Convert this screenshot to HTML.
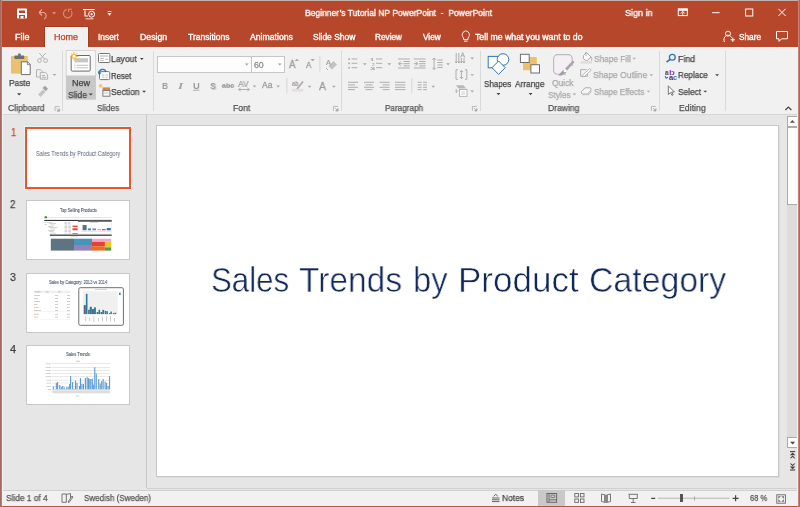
<!DOCTYPE html>
<html><head><meta charset="utf-8"><style>
*{margin:0;padding:0;box-sizing:border-box}
html,body{width:800px;height:507px;overflow:hidden;background:#E6E6E6;font-family:"Liberation Sans", sans-serif}
.a{position:absolute}
.t{position:absolute;white-space:pre;transform-origin:0 0;font-family:"Liberation Sans", sans-serif;will-change:transform}
svg{position:absolute;overflow:visible}
</style></head><body>
<!-- window chrome -->
<div class="a" style="left:0;top:0;width:800px;height:47px;background:#B7472A"></div>
<div class="a" style="left:0;top:0;width:800px;height:1px;background:#C6B2AA"></div>
<!-- home tab -->
<div class="a" style="left:44px;top:26px;width:45px;height:21px;background:#A63A1E"></div>
<div class="a" style="left:45px;top:27px;width:43px;height:21px;background:#FAFAFA"></div>
<div class="a" style="left:46px;top:28px;width:41px;height:20px;background:#F1F1F1"></div>
<!-- ribbon -->
<div class="a" style="left:0;top:47px;width:800px;height:68px;background:#F1F1F1"></div>
<div class="a" style="left:0;top:114px;width:800px;height:1px;background:#D6D6D6"></div>
<!-- group separators -->
<div class="a" style="left:62px;top:51px;width:1px;height:60px;background:#DADADA"></div>
<div class="a" style="left:153px;top:51px;width:1px;height:60px;background:#DADADA"></div>
<div class="a" style="left:341px;top:51px;width:1px;height:60px;background:#DADADA"></div>
<div class="a" style="left:480px;top:51px;width:1px;height:60px;background:#DADADA"></div>
<div class="a" style="left:659px;top:51px;width:1px;height:60px;background:#DADADA"></div>
<div class="a" style="left:725px;top:51px;width:1px;height:60px;background:#DADADA"></div>
<!-- workspace -->
<div class="a" style="left:0;top:115px;width:800px;height:375px;background:#E6E6E6"></div>
<div class="a" style="left:146px;top:115px;width:1px;height:373px;background:#C6C6C6"></div>
<div class="a" style="left:147px;top:488px;width:651px;height:1px;background:#D0D0D0"></div>
<!-- slide -->
<div class="a" style="left:157px;top:126px;width:623px;height:352px;background:#DCDCDC"></div>
<div class="a" style="left:156px;top:125px;width:623px;height:352px;background:#C8C8C8"></div>
<div class="a" style="left:157px;top:126px;width:621px;height:350px;background:#FFFFFF"></div>
<!-- scrollbar -->
<div class="a" style="left:787px;top:116px;width:10px;height:331px;background:#DCDCDC"></div>
<div class="a" style="left:787px;top:116px;width:10px;height:11px;background:#fff;border:1px solid #ABABAB;border-right:none"></div>
<div class="a" style="left:787px;top:127px;width:10px;height:78px;background:#fff;border:1px solid #ABABAB;border-right:none"></div>
<div class="a" style="left:787px;top:437px;width:10px;height:11px;background:#fff;border:1px solid #ABABAB;border-right:none"></div>
<!-- status bar -->
<div class="a" style="left:0;top:490px;width:800px;height:1px;background:#D0D0D0"></div>
<div class="a" style="left:0;top:491px;width:800px;height:15px;background:#F1F1F1"></div>
<div class="a" style="left:538px;top:490px;width:27px;height:16px;background:#C9C9C9"></div>
<div class="a" style="left:0;top:506px;width:800px;height:1px;background:#C0533A"></div>
<!-- window borders -->
<div class="a" style="left:0;top:0;width:1px;height:507px;background:#A56A60"></div>
<div class="a" style="left:1px;top:0;width:1px;height:507px;background:#C07868"></div>
<div class="a" style="left:2px;top:47px;width:1px;height:459px;background:#EAF6F6"></div>
<div class="a" style="left:797px;top:47px;width:1px;height:459px;background:#EAF6F6"></div>
<div class="a" style="left:798px;top:0;width:1px;height:507px;background:#D08070"></div>
<div class="a" style="left:799px;top:0;width:1px;height:507px;background:#A86A60"></div>
<!-- thumbnails -->
<div class="a" style="left:24px;top:126px;width:108px;height:64px;background:#E4F4F6"></div>
<div class="a" style="left:25px;top:127px;width:106px;height:62px;border:2px solid #E9552C;background:#fff"></div>
<div class="a" style="left:26px;top:200px;width:104px;height:60px;border:1px solid #C8C8C8;background:#fff"></div>
<div class="a" style="left:26px;top:273px;width:104px;height:60px;border:1px solid #C8C8C8;background:#fff"></div>
<div class="a" style="left:26px;top:345px;width:104px;height:60px;border:1px solid #C8C8C8;background:#fff"></div>
<svg style="left:0;top:0" width="800" height="507" viewBox="0 0 800 507">
<!-- ===== Title bar QAT ===== -->
<!-- save -->
<rect x="17" y="8.5" width="10" height="10" rx="1" fill="#fff"/>
<rect x="19" y="10.5" width="6" height="2.5" fill="#B7472A"/>
<rect x="19" y="15" width="6" height="3.5" fill="#B7472A"/>
<rect x="20.5" y="16" width="3" height="2.5" fill="#fff"/>
<!-- undo -->
<path d="M39 12.5 L42 9.5 M39 12.5 L42 15.5 M39 12.5 H44 A3.5 3.5 0 0 1 44 19" fill="none" stroke="#E7A593" stroke-width="1.1"/>
<path d="M52.2 12.3 L56 12.3 L54.1 14.2 Z" fill="#E7A593"/>
<!-- redo -->
<path d="M66.6 9.4 A4.3 4.3 0 1 0 71.2 11" fill="none" stroke="#D98A74" stroke-width="1.1"/>
<path d="M72 9.2 H68.5 V12" fill="none" stroke="#D98A74" stroke-width="1.1"/>
<!-- from beginning -->
<rect x="83" y="9" width="11.6" height="1.1" fill="#fff"/>
<path d="M85 10.5 V16 H88" fill="none" stroke="#fff" stroke-width="1.1"/>
<circle cx="91.6" cy="14.2" r="3" fill="none" stroke="#fff" stroke-width="1"/>
<circle cx="91.6" cy="14.2" r="1.1" fill="#fff"/>
<rect x="85.5" y="18" width="8" height="1.5" fill="#E9A898"/>
<!-- customize -->
<rect x="107.6" y="11" width="3.8" height="0.8" fill="#fff"/>
<path d="M107.4 13 L111.6 13 L109.5 15.8 Z" fill="#fff"/>
<!-- ribbon display options -->
<rect x="678.3" y="8.8" width="9" height="6.8" fill="none" stroke="#fff" stroke-width="1"/>
<rect x="678.3" y="9" width="9" height="1.8" fill="#fff"/>
<path d="M682.8 11.5 L680.8 13.5 M682.8 11.5 L684.8 13.5 M682.8 11.5 V15.5" fill="none" stroke="#fff" stroke-width="0.9"/>
<!-- min max close -->
<rect x="712" y="12.2" width="7.6" height="1" fill="#fff"/>
<rect x="745.6" y="9" width="7.2" height="7" fill="none" stroke="#fff" stroke-width="1"/>
<path d="M778.4 8.8 L785.6 16 M785.6 8.8 L778.4 16" stroke="#fff" stroke-width="1"/>
<!-- share person -->
<circle cx="728" cy="33.6" r="2.5" fill="none" stroke="#fff" stroke-width="1"/>
<path d="M724.4 42 A4 4.5 0 0 1 731.6 37.6" fill="none" stroke="#fff" stroke-width="1"/>
<path d="M732.8 37.6 V42 M730.6 39.8 H735" stroke="#fff" stroke-width="1"/>
<!-- comment -->
<path d="M776.5 31.5 H787.5 V38.8 H781.6 L779 41.4 V38.8 H776.5 Z" fill="none" stroke="#fff" stroke-width="1"/>
<!-- tell me lightbulb -->
<path d="M463.6 38 C462 36.5 462 34 462.6 33.2 A3.4 3.4 0 0 1 469 33.2 C469.6 34 469.6 36.5 468 38 V39.6 H463.6 Z" fill="none" stroke="#fff" stroke-width="0.9"/>
<rect x="464" y="40.7" width="3.6" height="0.9" fill="#fff"/>
</svg>
<svg style="left:0;top:0" width="800" height="507" viewBox="0 0 800 507">
<!-- ===== Clipboard ===== -->
<rect x="11" y="56" width="16.7" height="17.6" fill="#EBC16F"/>
<rect x="14.4" y="55.5" width="9.8" height="3.4" rx="0.6" fill="#6E6E6E"/>
<rect x="18" y="53.6" width="2.8" height="2.4" rx="0.8" fill="#6E6E6E"/>
<path d="M21.3 61.8 H27.6 L30.2 64.4 V74.6 H21.3 Z" fill="#fff" stroke="#707070" stroke-width="1"/>
<path d="M27.4 61.8 V64.6 H30.2" fill="none" stroke="#707070" stroke-width="0.8"/>
<path d="M17.00 93.30 H21.30 L19.15 95.50 Z" fill="#444"/>
<!-- cut -->
<g fill="none" stroke="#B2B2B2" stroke-width="1">
<circle cx="39.4" cy="60.6" r="1.9"/>
<circle cx="45.6" cy="60.6" r="1.9"/>
<path d="M40.4 59 L45.8 53 M44.6 59 L39.2 53"/>
<!-- copy -->
<path d="M36.5 69.7 H40.6 L42.3 71.4 V77 H36.5 Z"/>
<path d="M40.3 72.4 H45.3 L47.6 74.7 V79.2 H40.3 Z" fill="#F1F1F1"/>
<path d="M41.8 75.5 H45 M41.8 77.3 H46"/>
</g>
<path d="M52.55 74.10 H56.35 L54.45 76.00 Z" fill="#A8A8A8"/>
<!-- format painter -->
<path d="M38 94.5 L43 89.5 L45.5 92 L40.5 97 Z" fill="#C4C4C4"/>
<path d="M42.5 88 L45 85.8 L48 88.8 L45.8 91.2 Z" fill="#A2A2A2"/>
<!-- launcher clipboard -->
<g fill="none" stroke="#ABABAB" stroke-width="0.8">
<path d="M55.0 111.0 V106.6 H59.5"/><path d="M56.6 108.2 L59.3 110.9"/><path d="M59.6 108.8 V111.2 H57.2 Z" fill="#A0A0A0"/>
<path d="M333.5 110.8 V106.4 H338.0"/><path d="M335.1 108.0 L337.8 110.7"/><path d="M338.1 108.6 V111.0 H335.7 Z" fill="#A0A0A0"/>
<path d="M472.4 110.8 V106.4 H476.9"/><path d="M474.0 108.0 L476.7 110.7"/><path d="M477.0 108.6 V111.0 H474.6 Z" fill="#A0A0A0"/>
<path d="M651.4 110.8 V106.4 H655.9"/><path d="M653.0 108.0 L655.7 110.7"/><path d="M656.0 108.6 V111.0 H653.6 Z" fill="#A0A0A0"/>
</g>
<!-- ===== Slides ===== -->
<rect x="66.2" y="50.5" width="29.4" height="25.4" fill="#F6F6F6" stroke="#D4D4D4" stroke-width="1"/>
<rect x="65.9" y="75.9" width="30" height="23.8" fill="#C8C8C8"/>
<rect x="71.2" y="55.5" width="19" height="15.6" rx="1.2" fill="#fff" stroke="#6A6A6A" stroke-width="1"/>
<rect x="74.5" y="58.2" width="13.5" height="4.2" fill="#C6C6C6"/>
<path d="M76.5 65.3 H88 M76.5 67.8 H88" stroke="#B0B0B0" stroke-width="0.8"/>
<path d="M74.3 65.3 H75.3 M74.3 67.8 H75.3" stroke="#888" stroke-width="0.8"/>
<g stroke="#F0B038" stroke-width="0.9">
<path d="M74.1 52 V60.6 M69.8 56.3 H78.4 M71 53.2 L77.2 59.4 M77.2 53.2 L71 59.4"/>
</g>
<circle cx="74.1" cy="56.3" r="2" fill="#fff" stroke="#F0B038" stroke-width="0.9"/>
<path d="M88.70 93.60 H92.80 L90.75 95.50 Z" fill="#444"/>
<!-- layout -->
<rect x="98.5" y="53.5" width="11.4" height="9" rx="1" fill="#fff" stroke="#777" stroke-width="1"/>
<path d="M100 56 H108.5" stroke="#C0C0C0" stroke-width="1.2"/>
<path d="M100.2 58.3 H103.8 M100.2 60.3 H103.8 M105.2 59.3 H108.2" stroke="#B0B0B0" stroke-width="0.9"/>
<path d="M139.90 58.10 H143.70 L141.80 60.00 Z" fill="#444"/>
<!-- reset -->
<rect x="99.5" y="71.6" width="10.2" height="8" rx="1" fill="#fff" stroke="#777" stroke-width="1"/>
<path d="M102 75 H104.5 M102 77.2 H104.5 M105.5 75 H108 M105.5 77.2 H108" stroke="#B8B8B8" stroke-width="0.9"/>
<path d="M99 73.6 A3.6 3.4 0 0 1 106 72" fill="none" stroke="#2E75B6" stroke-width="1.3"/>
<path d="M97.8 71.3 L99 75 L101.6 72.8 Z" fill="#2E75B6"/>
<!-- section -->
<rect x="102.6" y="87.4" width="7.4" height="3" fill="#ED7D31"/>
<rect x="102.9" y="90.6" width="7" height="5.6" fill="#fff" stroke="#777" stroke-width="1"/>
<path d="M104 93 H108.5" stroke="#B8B8B8" stroke-width="0.8"/>
<circle cx="100.6" cy="85.8" r="1.9" fill="#F5C97B"/>
<path d="M142.20 90.80 H146.00 L144.10 92.70 Z" fill="#444"/>
<!-- ===== Font ===== -->
<rect x="157.5" y="56.5" width="94" height="16" fill="#FDFDFD" stroke="#C6C6C6" stroke-width="1"/>
<rect x="251.5" y="56.5" width="33" height="16" fill="#FDFDFD" stroke="#C6C6C6" stroke-width="1"/>
<path d="M244.90 63.60 H248.70 L246.80 65.50 Z" fill="#A0A0A0"/>
<path d="M277.90 63.60 H281.70 L279.80 65.50 Z" fill="#A0A0A0"/>
<path d="M294.6 61 H299 L296.8 58.7 Z" fill="#A6A6A6"/>
<path d="M310.40 59.00 H314.80 L312.60 61.30 Z" fill="#A6A6A6"/>
<rect x="319.4" y="56" width="1" height="15.5" fill="#D6D6D6"/>
<rect x="286.4" y="78" width="1" height="15.7" fill="#D6D6D6"/>
<!-- clear formatting eraser -->
<path d="M328.5 66 L333.5 61 L337 64.5 L332 69.5 Z" fill="#C2C2C2"/>
<path d="M326 68 L328 70" stroke="#B0B0B0" stroke-width="1"/>
<!-- strikethrough abc line -->
<path d="M221.5 86 H234.5" stroke="#A0A0A0" stroke-width="0.9"/>
<!-- AV arrows -->
<path d="M238.6 89.5 H249.4 M238.6 89.5 L240.6 88 M238.6 89.5 L240.6 91 M249.4 89.5 L247.4 88 M249.4 89.5 L247.4 91" stroke="#A8A8A8" stroke-width="0.9" fill="none"/>
<path d="M252.60 85.60 H256.40 L254.50 87.50 Z" fill="#A8A8A8"/>
<path d="M276.20 85.60 H280.00 L278.10 87.50 Z" fill="#A8A8A8"/>
<path d="M307.70 85.80 H311.50 L309.60 87.70 Z" fill="#A8A8A8"/>
<path d="M332.00 85.80 H335.80 L333.90 87.70 Z" fill="#A8A8A8"/>
<!-- highlighter -->
<path d="M297 89 L303 81.5" stroke="#A8A8A8" stroke-width="1.6"/>
<rect x="292" y="88.9" width="11.2" height="2.6" fill="#E6DCE5"/>
<!-- ===== Paragraph ===== -->
<g fill="#A6A6A6">
<rect x="348.3" y="58.3" width="1.6" height="1.6"/><rect x="348.3" y="62.6" width="1.6" height="1.6"/><rect x="348.3" y="67" width="1.6" height="1.6"/>
</g>
<g stroke="#A6A6A6" stroke-width="0.9" fill="none">
<path d="M351.6 59 H357.3 M351.6 63.3 H357.3 M351.6 67.7 H357.3"/>
<path d="M376 59 H382.2 M376 63.3 H382.2 M376 67.7 H382.2"/>
<!-- indents -->
<path d="M398 59 H409.8 M403.5 61.5 H409.8 M403.5 63.7 H409.8 M403.5 65.9 H409.8 M398 68 H409.8"/>
<path d="M398.5 63.7 L400.8 61.6 M398.5 63.7 L400.8 65.8 M398.5 63.7 H402.5"/>
<path d="M413.7 59 H425.6 M419.2 61.5 H425.6 M419.2 63.7 H425.6 M419.2 65.9 H425.6 M413.7 68 H425.6"/>
<path d="M417.8 63.7 L415.5 61.6 M417.8 63.7 L415.5 65.8 M417.8 63.7 H413.8"/>
<!-- align -->
<path d="M348 82.3 H358 M348 84.9 H355 M348 87.3 H358 M348 89.6 H355"/>
<path d="M364 82.3 H374 M365.5 84.9 H372.5 M364 87.3 H374 M365.5 89.6 H372.5"/>
<path d="M379.6 82.3 H389.6 M382.6 84.9 H389.6 M379.6 87.3 H389.6 M382.6 89.6 H389.6"/>
<path d="M395 82.3 H405.4 M395 84.9 H405.4 M395 87.3 H405.4 M395 89.6 H405.4"/>
<!-- columns -->
<path d="M417.7 82.3 H421.6 M417.7 84.9 H421.6 M417.7 87.3 H421.6 M417.7 89.6 H421.6 M423.1 82.3 H427 M423.1 84.9 H427 M423.1 87.3 H427 M423.1 89.6 H427"/>
<!-- line spacing -->
<path d="M434.1 58 V69.5 M432.3 59.8 L434.1 58 L435.9 59.8 M432.3 67.7 L434.1 69.5 L435.9 67.7"/>
<path d="M437.4 60 H442.8 M437.4 62.5 H442.8 M437.4 65 H442.8 M437.4 67.5 H442.8"/>
<!-- text direction -->
<path d="M456.2 53 V63 M458.8 53 V63 M461.4 58 V63 M464 58 V63 M455.2 61.5 L456.2 63 L457.2 61.5 M457.8 61.5 L458.8 63 L459.8 61.5 M460.4 61.5 L461.4 63 L462.4 61.5 M463 61.5 L464 63 L465 61.5"/>
<path d="M460.6 57.5 L462.7 52.5 L464.8 57.5 M461.4 55.8 H464"/>
<!-- align text -->
<path d="M457.8 69.7 H456 V79.3 H457.8 M465 69.7 H466.8 V79.3 H465"/>
<path d="M461.4 70.5 V78.6 M459.8 72 L461.4 70.5 L463 72 M459.8 77 L461.4 78.6 L463 77"/>
<!-- smartart -->
<rect x="459.5" y="89.5" width="7.5" height="6.8" fill="#fff" stroke="#A6A6A6" stroke-width="0.8"/>
<path d="M461.3 92 H465.2 M461.3 94 H465.2" stroke="#C8B8C8" stroke-width="0.8"/>
<!-- paragraph sep -->
</g>
<path d="M456 85.2 H463.5 L466 88.6 H458.5 Z" fill="#B8B8B8"/>
<path d="M456.2 89 V92.5 L458 90.5" stroke="#A6A6A6" stroke-width="0.9" fill="none"/>
<rect x="411.3" y="78.4" width="1" height="15.2" fill="#D6D6D6"/>
<g fill="#A8A8A8">
<path d="M362.90 63.30 H366.70 L364.80 65.20 Z"/>
<path d="M387.40 63.30 H391.20 L389.30 65.20 Z"/>
<path d="M446.15 63.30 H449.95 L448.05 65.20 Z"/>
<path d="M470.25 57.50 H474.05 L472.15 59.40 Z"/>
<path d="M470.25 74.20 H474.05 L472.15 76.10 Z"/>
<path d="M470.25 90.60 H474.05 L472.15 92.50 Z"/>
<path d="M431.30 85.80 H435.10 L433.20 87.70 Z"/>
</g>
<!-- ===== Drawing ===== -->
<g fill="#fff" stroke="#2E75B6" stroke-width="1">
<rect x="488.2" y="56.4" width="11.4" height="11.4"/>
<circle cx="503" cy="59.5" r="5.8"/>
<path d="M498.6 61 L505.2 67.7 L498.6 74.4 L492 67.7 Z"/>
</g>
<path d="M496.55 92.90 H500.35 L498.45 95.20 Z" fill="#444"/>
<rect x="523" y="57" width="13.8" height="13.2" fill="#EEC069"/>
<rect x="520.4" y="54.3" width="8.8" height="8.2" fill="#fff" stroke="#6E6E6E" stroke-width="1"/>
<rect x="530.9" y="64.7" width="8.6" height="8.3" fill="#fff" stroke="#6E6E6E" stroke-width="1"/>
<path d="M528.70 92.90 H532.50 L530.60 95.20 Z" fill="#444"/>
<!-- quick styles -->
<path d="M566 74.2 H557.6 A4 4 0 0 1 553.6 70.2 V58.6 A4 4 0 0 1 557.6 54.6 H568.2 A4 4 0 0 1 572.2 58.6 V66" fill="#F4EFF4" stroke="#B9B9B9" stroke-width="1.1"/>
<path d="M558.2 75.2 L563.5 69.8 L566.4 72.6 L561 75.8 Z" fill="#A0A0A0"/>
<path d="M565 68.6 L572.8 60.4 L574.6 62 L567.2 70.6 Z" fill="#A8A8A8"/>
<circle cx="564.8" cy="71" r="1.2" fill="#fff"/>
<path d="M572.5 93.6 H576.3 L574.4 95.5 Z" fill="#ABABAB"/>
<!-- shape fill -->
<path d="M583.5 55.5 L586.5 52.5 L591 57 L587.5 60.3 Q585 60.8 583.3 58.6 Z" fill="#fff" stroke="#A0A0A0" stroke-width="0.9"/>
<path d="M586 52 V56" stroke="#A0A0A0" stroke-width="0.9"/>
<path d="M591 57 Q592.5 58.5 591.6 60.6" fill="none" stroke="#A0A0A0" stroke-width="0.9"/>
<rect x="580.5" y="61.2" width="11.5" height="2.4" fill="#E2DAE2"/>
<!-- shape outline -->
<path d="M586.5 69.6 H580.6 V76.3 H587.3 V73" fill="none" stroke="#A8A8A8" stroke-width="0.9"/>
<path d="M582.8 75 L589.6 68.6 L591.2 70.2 L584.4 76.4 L582.4 76.8 Z" fill="#fff" stroke="#A8A8A8" stroke-width="0.8"/>
<!-- shape effects -->
<path d="M581.5 91.6 L585 87.8 H590.2 Q591.5 88.5 590.8 90.2 L587.8 94 H582.2 Q580.8 93.2 581.5 91.6 Z" fill="#F6F6F6" stroke="#A4A4A4" stroke-width="0.9"/>
<path d="M582.4 94.8 H588.4 L591.6 91" fill="none" stroke="#C8C8C8" stroke-width="1.1"/>
<g fill="#B0B0B0">
<path d="M632.35 57.70 H636.15 L634.25 59.60 Z"/>
<path d="M649.40 74.30 H653.20 L651.30 76.20 Z"/>
<path d="M646.55 90.70 H650.35 L648.45 92.60 Z"/>
</g>
<!-- ===== Editing ===== -->
<circle cx="672.3" cy="57.2" r="2.9" fill="none" stroke="#2E75B6" stroke-width="1.3"/>
<path d="M670.2 59.4 L666.6 62" stroke="#2E75B6" stroke-width="1.6"/>
<path d="M715.20 74.30 H719.00 L717.10 76.20 Z" fill="#444"/>
<path d="M703.35 90.70 H707.15 L705.25 92.60 Z" fill="#444"/>
<path d="M668.3 85.8 V94.5 L670.3 92.5 L672 95.4 L673.2 94.8 L671.6 92 H674.4 Z" fill="#fff" stroke="#6A6A6A" stroke-width="0.9"/>
<path d="M665 76 L666.2 78.3 L668 77.2" stroke="#2E75B6" stroke-width="1.1" fill="none"/>
<!-- collapse ribbon -->
<path d="M785.4 110 L788.4 107 L791.4 110" fill="none" stroke="#444" stroke-width="1.2"/>
</svg>
<svg style="left:0;top:0" width="800" height="507"><rect x="193" y="89.8" width="6.4" height="0.9" fill="#A8A8A8"/></svg>
<svg style="left:0;top:0" width="800" height="507" viewBox="0 0 800 507">
<!-- ===== slide 2 thumbnail: dashboard ===== -->
<rect x="44.5" y="216.2" width="2.5" height="2" rx="0.5" fill="#3C8A3C"/>
<rect x="47" y="217" width="65" height="0.6" fill="#D8D8D8"/>
<rect x="44.2" y="219.9" width="67.5" height="1.1" fill="#333333"/>
<g fill="#B4B4B4">
<rect x="47.0" y="222.0" width="5.2" height="0.55"/>
<rect x="64.5" y="222.0" width="2.5" height="0.55"/>
<rect x="68.2" y="222.0" width="2.4" height="0.55"/>
<rect x="49.2" y="223.3" width="7.0" height="0.55"/>
<rect x="64.5" y="223.3" width="2.6" height="0.55"/>
<rect x="68.2" y="223.3" width="2.1" height="0.55"/>
<rect x="50.4" y="224.7" width="4.1" height="0.55"/>
<rect x="64.5" y="224.7" width="2.8" height="0.55"/>
<rect x="68.2" y="224.7" width="2.3" height="0.55"/>
<rect x="48.0" y="226.0" width="5.2" height="0.55"/>
<rect x="64.5" y="226.0" width="3.0" height="0.55"/>
<rect x="68.2" y="226.0" width="2.5" height="0.55"/>
<rect x="49.2" y="227.4" width="8.2" height="0.55"/>
<rect x="64.5" y="227.4" width="2.5" height="0.55"/>
<rect x="68.2" y="227.4" width="2.6" height="0.55"/>
<rect x="50.4" y="228.7" width="4.8" height="0.55"/>
<rect x="64.5" y="228.7" width="2.6" height="0.55"/>
<rect x="68.2" y="228.7" width="2.9" height="0.55"/>
<rect x="48.0" y="230.1" width="6.6" height="0.55"/>
<rect x="64.5" y="230.1" width="2.7" height="0.55"/>
<rect x="68.2" y="230.1" width="2.7" height="0.55"/>
<rect x="49.2" y="231.4" width="4.3" height="0.55"/>
<rect x="64.5" y="231.4" width="2.8" height="0.55"/>
<rect x="68.2" y="231.4" width="2.6" height="0.55"/>
<rect x="50.4" y="232.8" width="5.5" height="0.55"/>
<rect x="64.5" y="232.8" width="2.0" height="0.55"/>
<rect x="68.2" y="232.8" width="2.9" height="0.55"/>
<rect x="44.5" y="222" width="2" height="0.6"/><rect x="44.5" y="224" width="2" height="0.6"/>
</g>
<rect x="72.5" y="225.6" width="5.2" height="1.4" fill="#EE4A40"/>
<rect x="72.5" y="228.3" width="5.2" height="1.9" fill="#EE3A30"/>
<rect x="72.5" y="233" width="5.2" height="1" fill="#5CB85C"/>
<rect x="78" y="221" width="33.7" height="13" fill="#fff" stroke="#E0E0E0" stroke-width="0.4"/>
<rect x="78" y="221" width="33.7" height="0.8" fill="#5A5A5A"/>
<rect x="90" y="222.5" width="8" height="0.5" fill="#B0B0B0"/>
<rect x="82.6" y="225" width="4" height="5.3" fill="#5D7180"/>
<rect x="87.8" y="228.4" width="3.2" height="1.9" fill="#3D8DB0"/>
<rect x="92.5" y="228.4" width="3.5" height="1.9" fill="#8E7CB8"/>
<rect x="97.6" y="229" width="3.4" height="1.3" fill="#E89AC0"/>
<rect x="102" y="229" width="3.6" height="1.3" fill="#E04848"/>
<rect x="106.7" y="228.1" width="4.1" height="2.2" fill="#2E6E9E"/>
<rect x="81" y="231" width="30" height="0.4" fill="#C8C8C8"/>
<rect x="49.8" y="234.5" width="61.9" height="1.4" fill="#4A4A4A"/>
<rect x="70" y="236.6" width="8" height="0.5" fill="#C0C0C0"/>
<rect x="50.8" y="238.7" width="23.2" height="11.9" fill="#5F7482"/>
<rect x="74" y="238.7" width="18" height="6.3" fill="#4A93B8"/>
<rect x="74" y="245" width="18" height="5.6" fill="#9482B8"/>
<rect x="92" y="238.7" width="19.2" height="3.1" fill="#F2A6CB"/>
<rect x="92" y="241.8" width="12.9" height="4.4" fill="#E4432F"/>
<rect x="92" y="246.2" width="12.9" height="4.4" fill="#EE6A2A"/>
<rect x="104.9" y="241.8" width="6.3" height="5.6" fill="#E8C82A"/>
<rect x="104.9" y="247.4" width="6.3" height="3.2" fill="#4E9A4E"/>
<!-- ===== slide 3 ===== -->
<rect x="33.8" y="290.6" width="36.3" height="2.7" fill="#F0F0F0"/>
<g fill="#BFB2A8">
<rect x="34.5" y="291.5" width="6" height="0.8"/><rect x="46" y="291.5" width="2.5" height="0.8"/><rect x="58" y="291.5" width="2.5" height="0.8"/>
</g>
<g fill="#C4B8B0">
<rect x="34" y="295.2" width="6" height="0.7"/><rect x="55" y="295.2" width="3" height="0.7"/><rect x="67" y="295.2" width="3" height="0.7"/>
<rect x="34" y="298.1" width="4" height="0.7"/><rect x="55" y="298.1" width="3" height="0.7"/><rect x="67" y="298.1" width="3" height="0.7"/>
<rect x="34" y="301" width="6" height="0.7"/><rect x="55" y="301" width="3" height="0.7"/><rect x="67" y="301" width="3" height="0.7"/>
<rect x="34" y="304.2" width="3.5" height="0.7"/><rect x="55" y="304.2" width="3" height="0.7"/><rect x="67" y="304.2" width="3" height="0.7"/>
<rect x="34" y="307.1" width="5" height="0.7"/><rect x="55" y="307.1" width="3" height="0.7"/><rect x="67" y="307.1" width="3" height="0.7"/>
<rect x="34" y="310.1" width="7" height="0.7"/><rect x="55" y="310.1" width="3" height="0.7"/><rect x="67" y="310.1" width="3" height="0.7"/>
<rect x="34" y="313.9" width="5" height="0.7"/><rect x="55" y="313.9" width="3" height="0.7"/><rect x="67" y="313.9" width="3" height="0.7"/>
<rect x="34" y="316.7" width="4" height="0.7"/><rect x="55" y="316.7" width="3" height="0.7"/><rect x="67" y="316.7" width="3" height="0.7"/>
</g>
<rect x="34" y="311.6" width="36" height="0.3" fill="#DDD"/>
<rect x="34" y="319" width="36" height="0.3" fill="#E4E4E4"/>
<rect x="78.8" y="287.7" width="44.6" height="37.6" rx="1.5" fill="#fff" stroke="#6E6E6E" stroke-width="1"/>
<rect x="95" y="289" width="12" height="0.6" fill="#B8B8B8"/>
<rect x="82.8" y="291.3" width="34.9" height="23.1" fill="#F0F0F0"/>
<g fill="#56687A">
<rect x="83.75" y="305.1" width="2.10" height="9.00"/>
<rect x="88.1" y="309.75" width="1.65" height="4.35"/>
<rect x="92" y="309" width="1.90" height="5.10"/>
<rect x="96.65" y="312" width="1.85" height="2.10"/>
<rect x="100.6" y="312" width="1.70" height="2.10"/>
<rect x="104.75" y="310.9" width="1.75" height="3.20"/>
<rect x="108.9" y="313.1" width="1.50" height="1.00"/>
<rect x="112.85" y="313.1" width="1.65" height="1.00"/>
</g>
<g fill="#2C7AA2">
<rect x="85.85" y="293.85" width="1.65" height="20.25"/>
<rect x="89.75" y="306.75" width="2.10" height="7.35"/>
<rect x="93.9" y="307.35" width="2.00" height="6.75"/>
<rect x="98.5" y="309.75" width="1.60" height="4.35"/>
<rect x="102.3" y="309.9" width="1.85" height="4.20"/>
<rect x="106.5" y="311.25" width="1.40" height="2.85"/>
<rect x="110.4" y="311.6" width="1.50" height="2.50"/>
<rect x="114.5" y="312.75" width="1.70" height="1.35"/>
<rect x="119.1" y="292.6" width="1.5" height="2.4"/>
</g>
<g fill="#A8A8A8">
<rect x="85.5" y="316.5" width="0.6" height="5"/><rect x="89.5" y="317.5" width="0.6" height="3.5"/><rect x="93.6" y="316.2" width="0.6" height="6"/>
<rect x="98.3" y="318" width="0.6" height="3.5"/><rect x="102.2" y="317" width="0.6" height="4.5"/><rect x="106.4" y="316.2" width="0.6" height="5"/>
<rect x="110.4" y="316.2" width="0.6" height="5.5"/><rect x="114.4" y="318" width="0.6" height="3.5"/>
</g>
<!-- ===== slide 4 ===== -->
<g fill="#C8C8C8">
<rect x="51.8" y="363.6" width="58.4" height="0.4"/><rect x="51.8" y="367.1" width="58.4" height="0.4"/><rect x="51.8" y="370" width="58.4" height="0.4"/>
<rect x="51.8" y="373.3" width="58.4" height="0.4"/><rect x="51.8" y="376.2" width="58.4" height="0.4"/><rect x="51.8" y="379.9" width="58.4" height="0.4"/>
<rect x="51.8" y="382.8" width="58.4" height="0.4"/><rect x="51.8" y="386.1" width="58.4" height="0.4"/><rect x="51.8" y="389.1" width="58.4" height="0.5"/>
</g>
<g fill="#B8B8B8">
<rect x="45.6" y="363.6" width="5.4" height="0.6"/><rect x="45.6" y="367.1" width="5.4" height="0.6"/><rect x="45.6" y="370" width="5.4" height="0.6"/>
<rect x="45.6" y="373.3" width="5.4" height="0.6"/><rect x="45.6" y="376.2" width="5.4" height="0.6"/><rect x="46.5" y="379.9" width="4.5" height="0.6"/>
<rect x="46.5" y="382.8" width="4.5" height="0.6"/><rect x="46.5" y="386.1" width="4.5" height="0.6"/><rect x="48" y="389" width="3" height="0.6"/>
<rect x="76" y="360.8" width="4" height="0.8"/><rect x="76" y="395.6" width="3.4" height="0.7"/>
</g>
<g fill="#5B9BD5">
<rect x="52.81" y="386.49" width="1.1" height="2.81"/>
<rect x="55.77" y="383.04" width="1.1" height="6.26"/>
<rect x="57.05" y="382.05" width="1.1" height="7.25"/>
<rect x="59.22" y="385.01" width="1.1" height="4.29"/>
<rect x="60.70" y="386.98" width="1.1" height="2.32"/>
<rect x="62.18" y="386.00" width="1.1" height="3.30"/>
<rect x="63.66" y="387.28" width="1.1" height="2.02"/>
<rect x="66.13" y="387.28" width="1.1" height="2.02"/>
<rect x="67.61" y="386.98" width="1.1" height="2.32"/>
<rect x="69.09" y="384.02" width="1.1" height="5.28"/>
<rect x="70.07" y="376.13" width="1.1" height="13.17"/>
<rect x="72.04" y="382.05" width="1.1" height="7.25"/>
<rect x="73.52" y="388.95" width="1.1" height="0.35"/>
<rect x="75.00" y="380.57" width="1.1" height="8.73"/>
<rect x="76.48" y="383.04" width="1.1" height="6.26"/>
<rect x="78.95" y="386.00" width="1.1" height="3.30"/>
<rect x="79.93" y="378.11" width="1.1" height="11.19"/>
<rect x="81.41" y="384.02" width="1.1" height="5.28"/>
<rect x="82.89" y="384.02" width="1.1" height="5.28"/>
<rect x="84.86" y="378.11" width="1.1" height="11.19"/>
<rect x="86.64" y="377.12" width="1.1" height="12.18"/>
<rect x="88.02" y="378.11" width="1.1" height="11.19"/>
<rect x="89.30" y="379.09" width="1.1" height="10.21"/>
<rect x="90.29" y="379.09" width="1.1" height="10.21"/>
<rect x="91.77" y="378.60" width="1.1" height="10.70"/>
<rect x="92.75" y="384.52" width="1.1" height="4.78"/>
<rect x="94.23" y="367.26" width="1.1" height="22.04"/>
<rect x="95.71" y="373.67" width="1.1" height="15.63"/>
<rect x="98.18" y="379.09" width="1.1" height="10.21"/>
<rect x="99.66" y="383.53" width="1.1" height="5.77"/>
<rect x="101.14" y="381.07" width="1.1" height="8.23"/>
<rect x="102.62" y="379.09" width="1.1" height="10.21"/>
<rect x="104.59" y="381.56" width="1.1" height="7.74"/>
<rect x="106.07" y="383.04" width="1.1" height="6.26"/>
<rect x="107.55" y="386.00" width="1.1" height="3.30"/>
<rect x="109.03" y="376.13" width="1.1" height="13.17"/>
</g>
<rect x="52.5" y="390.3" width="57.5" height="3" fill="#E0DCDE"/>
<!-- ===== status bar icons ===== -->
<g fill="none" stroke="#666" stroke-width="0.9">
<path d="M62 494 H66.3 V502.3 H62 Z M66.3 494.3 L70.5 493.6 V498"/>
<path d="M68 502 L72 496 L73 497 L69 502.5 Z"/>
</g>
<g stroke="#555" stroke-width="0.9" fill="none">
<path d="M492 499.8 H499.5 M492 501.6 H499.5 M492 498 H499.5"/>
<path d="M493.6 496.3 L495.75 494.3 L497.9 496.3"/>
</g>
<rect x="547" y="493.5" width="9.6" height="8.8" fill="none" stroke="#6A6A6A" stroke-width="1"/>
<path d="M549 493.8 V502 M549 499.8 H556.4" stroke="#6A6A6A" stroke-width="0.9"/>
<rect x="550.8" y="495" width="4" height="2.6" rx="0.8" fill="none" stroke="#6A6A6A" stroke-width="0.8"/>
<g fill="none" stroke="#6A6A6A" stroke-width="0.9">
<rect x="574.8" y="493.5" width="3.6" height="3.4"/><rect x="580.4" y="493.5" width="3.6" height="3.4"/>
<rect x="574.8" y="499" width="3.6" height="3.4"/><rect x="580.4" y="499" width="3.6" height="3.4"/>
<path d="M601.5 494 L605.5 495 V502.5 L601.5 501.5 Z M610.5 494 L606.5 495 V502.5 L610.5 501.5 Z"/><rect x="604" y="495" width="4" height="7" fill="#888" stroke="none"/>
<path d="M628.5 494.3 H638 M629.3 494.5 V498.5 H637.3 V494.5 M633.2 498.5 V502.5 M631 502.5 H635.5"/>
<path d="M651.2 498.3 H655.2 M732.6 498.3 H738.6 M735.6 495.3 V501.3" stroke="#444" stroke-width="1.2"/>
<rect x="776.8" y="494.8" width="8.6" height="8.4" stroke="#666"/>
</g>
<rect x="658" y="497.6" width="71.6" height="1.4" fill="#C6C6C6"/>
<rect x="680" y="494" width="3" height="8" fill="#555"/>
<rect x="694.2" y="496.5" width="0.8" height="4" fill="#999"/>
<g fill="#666"><path d="M778.3 496.3 H780.8 L778.3 498.8 Z"/><path d="M783.9 496.3 H781.4 L783.9 498.8 Z"/><path d="M778.3 501.7 H780.8 L778.3 499.2 Z"/><path d="M783.9 501.7 H781.4 L783.9 499.2 Z"/></g>
<!-- scrollbar arrows -->
<path d="M789.8 122.8 L792.4 120 L795 122.8 Z" fill="#555"/>
<path d="M790 441.8 H795.2 L792.6 444.6 Z" fill="#444"/>
<path d="M790 451.6 H795.2" stroke="#444" stroke-width="1.1"/>
<path d="M789.8 455.2 L792.6 452.4 L795.4 455.2 Z" fill="#444"/>
<path d="M789.8 458.2 L792.6 455.4 L795.4 458.2 L794 458.2 L792.6 456.9 L791.2 458.2 Z" fill="#444"/>
<path d="M790 470 H795.2" stroke="#444" stroke-width="1.1"/>
<path d="M789.8 466.4 L792.6 469.2 L795.4 466.4 Z" fill="#444"/>
<path d="M789.8 463.4 L792.6 466.2 L795.4 463.4 L794 463.4 L792.6 464.7 L791.2 463.4 Z" fill="#444"/>
</svg>

<div class="t" style="left:305.10px;top:8.00px;font-size:9.50px;line-height:9.50px;color:#ffffff;font-weight:normal;font-style:normal;transform:scaleX(0.8986);-webkit-text-stroke:0.35px #ffffff;">Beginner’s Tutorial NP PowerPoint  -  PowerPoint</div>
<div class="t" style="left:625.05px;top:8.00px;font-size:9.50px;line-height:9.50px;color:#ffffff;font-weight:normal;font-style:normal;transform:scaleX(0.9464);-webkit-text-stroke:0.35px #ffffff;">Sign in</div>
<div class="t" style="left:14.92px;top:34.00px;font-size:8.25px;line-height:8.25px;color:#ffffff;font-weight:normal;font-style:normal;transform:scaleX(1.0833);-webkit-text-stroke:0.35px #ffffff;">File</div>
<div class="t" style="left:53.90px;top:34.00px;font-size:8.25px;line-height:8.25px;color:#C4442A;font-weight:normal;font-style:normal;transform:scaleX(1.0952);-webkit-text-stroke:0.25px #C4442A;">Home</div>
<div class="t" style="left:98.49px;top:34.00px;font-size:8.25px;line-height:8.25px;color:#ffffff;font-weight:normal;font-style:normal;transform:scaleX(1.0125);-webkit-text-stroke:0.35px #ffffff;">Insert</div>
<div class="t" style="left:139.54px;top:34.00px;font-size:8.25px;line-height:8.25px;color:#ffffff;font-weight:normal;font-style:normal;transform:scaleX(1.0583);-webkit-text-stroke:0.35px #ffffff;">Design</div>
<div class="t" style="left:187.50px;top:34.00px;font-size:8.25px;line-height:8.25px;color:#ffffff;font-weight:normal;font-style:normal;transform:scaleX(1.0375);-webkit-text-stroke:0.35px #ffffff;">Transitions</div>
<div class="t" style="left:250.00px;top:34.00px;font-size:8.25px;line-height:8.25px;color:#ffffff;font-weight:normal;font-style:normal;transform:scaleX(1.0512);-webkit-text-stroke:0.35px #ffffff;">Animations</div>
<div class="t" style="left:312.98px;top:34.00px;font-size:8.25px;line-height:8.25px;color:#ffffff;font-weight:normal;font-style:normal;transform:scaleX(1.0250);-webkit-text-stroke:0.35px #ffffff;">Slide Show</div>
<div class="t" style="left:375.31px;top:34.00px;font-size:8.25px;line-height:8.25px;color:#ffffff;font-weight:normal;font-style:normal;transform:scaleX(0.9885);-webkit-text-stroke:0.35px #ffffff;">Review</div>
<div class="t" style="left:423.00px;top:34.00px;font-size:8.25px;line-height:8.25px;color:#ffffff;font-weight:normal;font-style:normal;transform:scaleX(1.0000);-webkit-text-stroke:0.35px #ffffff;">View</div>
<div class="t" style="left:474.75px;top:34.00px;font-size:8.25px;line-height:8.25px;color:#ffffff;font-weight:normal;font-style:normal;transform:scaleX(1.0564);-webkit-text-stroke:0.35px #ffffff;">Tell me what you want to do</div>
<div class="t" style="left:738.50px;top:34.00px;font-size:8.25px;line-height:8.25px;color:#ffffff;font-weight:normal;font-style:normal;transform:scaleX(1.0000);-webkit-text-stroke:0.35px #ffffff;">Share</div>
<div class="t" style="left:8.75px;top:79.00px;font-size:8.75px;line-height:8.75px;color:#444444;font-weight:normal;font-style:normal;transform:scaleX(0.9524);-webkit-text-stroke:0.25px #444444;">Paste</div>
<div class="t" style="left:8.00px;top:104.00px;font-size:8.75px;line-height:8.75px;color:#555555;font-weight:normal;font-style:normal;transform:scaleX(0.9784);-webkit-text-stroke:0.25px #555555;">Clipboard</div>
<div class="t" style="left:71.64px;top:79.00px;font-size:8.50px;line-height:8.50px;color:#444444;font-weight:normal;font-style:normal;transform:scaleX(1.0625);-webkit-text-stroke:0.25px #444444;">New</div>
<div class="t" style="left:68.18px;top:91.00px;font-size:9.25px;line-height:9.25px;color:#444444;font-weight:normal;font-style:normal;transform:scaleX(0.9211);-webkit-text-stroke:0.25px #444444;">Slide</div>
<div class="t" style="left:111.27px;top:55.00px;font-size:9.25px;line-height:9.25px;color:#444444;font-weight:normal;font-style:normal;transform:scaleX(0.9296);-webkit-text-stroke:0.25px #444444;">Layout</div>
<div class="t" style="left:111.14px;top:72.00px;font-size:9.00px;line-height:9.00px;color:#444444;font-weight:normal;font-style:normal;transform:scaleX(0.8609);-webkit-text-stroke:0.25px #444444;">Reset</div>
<div class="t" style="left:111.02px;top:88.00px;font-size:8.75px;line-height:8.75px;color:#444444;font-weight:normal;font-style:normal;transform:scaleX(0.9786);-webkit-text-stroke:0.25px #444444;">Section</div>
<div class="t" style="left:96.67px;top:104.00px;font-size:8.75px;line-height:8.75px;color:#555555;font-weight:normal;font-style:normal;transform:scaleX(0.9304);-webkit-text-stroke:0.25px #555555;">Slides</div>
<div class="t" style="left:232.61px;top:104.00px;font-size:8.75px;line-height:8.75px;color:#555555;font-weight:normal;font-style:normal;transform:scaleX(0.9882);-webkit-text-stroke:0.25px #555555;">Font</div>
<div class="t" style="left:253.80px;top:61.00px;font-size:8.75px;line-height:8.75px;color:#888888;font-weight:normal;font-style:normal;transform:scaleX(1.0000);-webkit-text-stroke:0.25px #888888;">60</div>
<div class="t" style="left:385.47px;top:104.00px;font-size:8.75px;line-height:8.75px;color:#555555;font-weight:normal;font-style:normal;transform:scaleX(0.9325);-webkit-text-stroke:0.25px #555555;">Paragraph</div>
<div class="t" style="left:484.13px;top:80.00px;font-size:9.25px;line-height:9.25px;color:#444444;font-weight:normal;font-style:normal;transform:scaleX(0.8667);-webkit-text-stroke:0.25px #444444;">Shapes</div>
<div class="t" style="left:515.40px;top:80.00px;font-size:9.25px;line-height:9.25px;color:#444444;font-weight:normal;font-style:normal;transform:scaleX(0.8970);-webkit-text-stroke:0.25px #444444;">Arrange</div>
<div class="t" style="left:552.00px;top:79.00px;font-size:9.25px;line-height:9.25px;color:#a8a8a8;font-weight:normal;font-style:normal;transform:scaleX(0.9083);-webkit-text-stroke:0.25px #a8a8a8;">Quick</div>
<div class="t" style="left:548.10px;top:91.00px;font-size:9.25px;line-height:9.25px;color:#a8a8a8;font-weight:normal;font-style:normal;transform:scaleX(0.9000);-webkit-text-stroke:0.25px #a8a8a8;">Styles</div>
<div class="t" style="left:548.02px;top:104.00px;font-size:8.75px;line-height:8.75px;color:#555555;font-weight:normal;font-style:normal;transform:scaleX(0.9774);-webkit-text-stroke:0.25px #555555;">Drawing</div>
<div class="t" style="left:593.50px;top:55.00px;font-size:9.25px;line-height:9.25px;color:#a8a8a8;font-weight:normal;font-style:normal;transform:scaleX(0.8975);-webkit-text-stroke:0.25px #a8a8a8;">Shape Fill</div>
<div class="t" style="left:593.47px;top:71.00px;font-size:9.25px;line-height:9.25px;color:#a8a8a8;font-weight:normal;font-style:normal;transform:scaleX(0.9263);-webkit-text-stroke:0.25px #a8a8a8;">Shape Outline</div>
<div class="t" style="left:593.50px;top:88.00px;font-size:9.00px;line-height:9.00px;color:#a8a8a8;font-weight:normal;font-style:normal;transform:scaleX(0.9018);-webkit-text-stroke:0.25px #a8a8a8;">Shape Effects</div>
<div class="t" style="left:678.05px;top:55.00px;font-size:9.25px;line-height:9.25px;color:#444444;font-weight:normal;font-style:normal;transform:scaleX(0.9529);-webkit-text-stroke:0.25px #444444;">Find</div>
<div class="t" style="left:678.12px;top:71.00px;font-size:9.25px;line-height:9.25px;color:#444444;font-weight:normal;font-style:normal;transform:scaleX(0.8788);-webkit-text-stroke:0.25px #444444;">Replace</div>
<div class="t" style="left:678.08px;top:88.00px;font-size:9.00px;line-height:9.00px;color:#444444;font-weight:normal;font-style:normal;transform:scaleX(0.9250);-webkit-text-stroke:0.25px #444444;">Select</div>
<div class="t" style="left:679.00px;top:104.00px;font-size:8.75px;line-height:8.75px;color:#555555;font-weight:normal;font-style:normal;transform:scaleX(0.9962);-webkit-text-stroke:0.25px #555555;">Editing</div>
<div class="t" style="left:6.42px;top:494.00px;font-size:9.00px;line-height:9.00px;color:#555555;font-weight:normal;font-style:normal;transform:scaleX(0.9261);-webkit-text-stroke:0.25px #555555;">Slide 1 of 4</div>
<div class="t" style="left:84.01px;top:494.00px;font-size:9.00px;line-height:9.00px;color:#555555;font-weight:normal;font-style:normal;transform:scaleX(0.8932);-webkit-text-stroke:0.25px #555555;">Swedish (Sweden)</div>
<div class="t" style="left:502.09px;top:494.00px;font-size:9.25px;line-height:9.25px;color:#444444;font-weight:normal;font-style:normal;transform:scaleX(0.9130);-webkit-text-stroke:0.25px #444444;">Notes</div>
<div class="t" style="left:749.60px;top:493.00px;font-size:9.50px;line-height:9.50px;color:#555555;font-weight:normal;font-style:normal;transform:scaleX(0.7909);-webkit-text-stroke:0.25px #555555;">68 %</div>
<div class="t" style="left:10.53px;top:127.00px;font-size:10.50px;line-height:10.50px;color:#D24726;font-weight:normal;font-style:normal;transform:scaleX(0.8750);-webkit-text-stroke:0.25px #D24726;">1</div>
<div class="t" style="left:10.15px;top:199.00px;font-size:11.25px;line-height:11.25px;color:#444444;font-weight:normal;font-style:normal;transform:scaleX(0.8750);-webkit-text-stroke:0.25px #444444;">2</div>
<div class="t" style="left:9.60px;top:272.00px;font-size:11.00px;line-height:11.00px;color:#444444;font-weight:normal;font-style:normal;transform:scaleX(0.9667);-webkit-text-stroke:0.25px #444444;">3</div>
<div class="t" style="left:9.60px;top:344.00px;font-size:10.75px;line-height:10.75px;color:#444444;font-weight:normal;font-style:normal;transform:scaleX(1.0250);-webkit-text-stroke:0.25px #444444;">4</div>
<div class="t" style="left:211.31px;top:262.00px;font-size:35.00px;line-height:35.00px;color:#0F2858;font-weight:normal;font-style:normal;transform:scaleX(0.8929);-webkit-text-stroke:0.55px #0F2858;-webkit-text-stroke-color:#fff;">Sales</div>
<div class="t" style="left:299.14px;top:262.00px;font-size:35.00px;line-height:35.00px;color:#0F2858;font-weight:normal;font-style:normal;transform:scaleX(0.9566);-webkit-text-stroke:0.55px #0F2858;-webkit-text-stroke-color:#fff;">Trends</div>
<div class="t" style="left:413.13px;top:262.00px;font-size:35.00px;line-height:35.00px;color:#0F2858;font-weight:normal;font-style:normal;transform:scaleX(0.9343);-webkit-text-stroke:0.55px #0F2858;-webkit-text-stroke-color:#fff;">by</div>
<div class="t" style="left:457.81px;top:262.00px;font-size:35.00px;line-height:35.00px;color:#0F2858;font-weight:normal;font-style:normal;transform:scaleX(0.9966);-webkit-text-stroke:0.55px #0F2858;-webkit-text-stroke-color:#fff;">Product</div>
<div class="t" style="left:588.87px;top:262.00px;font-size:35.00px;line-height:35.00px;color:#0F2858;font-weight:normal;font-style:normal;transform:scaleX(0.9657);-webkit-text-stroke:0.55px #0F2858;-webkit-text-stroke-color:#fff;">Category</div>
<div class="t" style="left:35.65px;top:151.00px;font-size:6.50px;line-height:6.50px;color:#5A6478;font-weight:normal;font-style:normal;transform:scaleX(0.8500);-webkit-text-stroke:0px #5A6478;">Sales Trends by Product Category</div>
<div class="t" style="left:59.50px;top:208.00px;font-size:5.00px;line-height:5.00px;color:#44546A;font-weight:normal;font-style:normal;transform:scaleX(0.8089);-webkit-text-stroke:0.1px #44546A;">Top Selling Products</div>
<div class="t" style="left:48.70px;top:280.00px;font-size:5.00px;line-height:5.00px;color:#44546A;font-weight:normal;font-style:normal;transform:scaleX(0.7892);-webkit-text-stroke:0.1px #44546A;">Sales by Category: 2013 vs 2014</div>
<div class="t" style="left:65.80px;top:352.00px;font-size:5.00px;line-height:5.00px;color:#44546A;font-weight:normal;font-style:normal;transform:scaleX(0.8103);-webkit-text-stroke:0.1px #44546A;">Sales Trends:</div>
<div class="t" style="left:161.80px;top:82.00px;font-size:9.25px;line-height:9.25px;color:#9C9C9C;font-weight:bold;font-style:normal;transform:scaleX(0.9000);-webkit-text-stroke:0px #9C9C9C;">B</div>
<div class="t" style="left:178.00px;top:82.00px;font-size:9.25px;line-height:9.25px;color:#9C9C9C;font-weight:normal;font-style:italic;font-family:'Liberation Serif';transform:scaleX(1.6000);-webkit-text-stroke:0.2px #9C9C9C;">I</div>
<div class="t" style="left:193.20px;top:82.00px;font-size:9.25px;line-height:9.25px;color:#9C9C9C;font-weight:bold;font-style:normal;transform:scaleX(1.0167);-webkit-text-stroke:0px #9C9C9C;">U</div>
<div class="t" style="left:209.50px;top:81.00px;font-size:9.50px;line-height:9.50px;color:#9C9C9C;font-weight:bold;font-style:normal;transform:scaleX(0.9167);-webkit-text-stroke:0px #9C9C9C;text-shadow:1px 1px 0.6px #C8C8C8;">S</div>
<div class="t" style="left:222.00px;top:82.00px;font-size:7.00px;line-height:7.00px;color:#9C9C9C;font-weight:bold;font-style:normal;transform:scaleX(1.0000);-webkit-text-stroke:0px #9C9C9C;">abc</div>
<div class="t" style="left:238.40px;top:80.00px;font-size:9.25px;line-height:9.25px;color:#9C9C9C;font-weight:normal;font-style:normal;transform:scaleX(0.9167);-webkit-text-stroke:0.2px #9C9C9C;">AV</div>
<div class="t" style="left:262.00px;top:81.00px;font-size:8.50px;line-height:8.50px;color:#9C9C9C;font-weight:normal;font-style:normal;transform:scaleX(1.0000);-webkit-text-stroke:0.3px #9C9C9C;">Aa</div>
<div class="t" style="left:289.20px;top:59.00px;font-size:11.25px;line-height:11.25px;color:#9C9C9C;font-weight:normal;font-style:normal;transform:scaleX(0.8750);-webkit-text-stroke:0.3px #9C9C9C;">A</div>
<div class="t" style="left:305.70px;top:61.00px;font-size:8.50px;line-height:8.50px;color:#9C9C9C;font-weight:normal;font-style:normal;transform:scaleX(0.9333);-webkit-text-stroke:0.3px #9C9C9C;">A</div>
<div class="t" style="left:325.70px;top:59.00px;font-size:7.00px;line-height:7.00px;color:#9C9C9C;font-weight:normal;font-style:normal;transform:scaleX(1.0600);-webkit-text-stroke:0.2px #9C9C9C;">A</div>
<div class="t" style="left:291.80px;top:81.00px;font-size:6.50px;line-height:6.50px;color:#9C9C9C;font-weight:bold;font-style:normal;transform:scaleX(0.8857);-webkit-text-stroke:0px #9C9C9C;">ab</div>
<div class="t" style="left:318.70px;top:81.00px;font-size:11.25px;line-height:11.25px;color:#9C9C9C;font-weight:normal;font-style:normal;transform:scaleX(0.9250);-webkit-text-stroke:0.3px #9C9C9C;">A</div>
<div class="t" style="left:370.40px;top:58.00px;font-size:4.00px;line-height:4.00px;color:#9C9C9C;font-weight:normal;font-style:normal;transform:scaleX(1.9000);-webkit-text-stroke:0.1px #9C9C9C;">1</div>
<div class="t" style="left:372.10px;top:63.00px;font-size:4.00px;line-height:4.00px;color:#9C9C9C;font-weight:normal;font-style:normal;transform:scaleX(1.1500);-webkit-text-stroke:0.1px #9C9C9C;">2</div>
<div class="t" style="left:369.80px;top:67.00px;font-size:4.00px;line-height:4.00px;color:#9C9C9C;font-weight:normal;font-style:normal;transform:scaleX(2.3000);-webkit-text-stroke:0.1px #9C9C9C;">3</div>
<div class="t" style="left:665.00px;top:69.00px;font-size:7.50px;line-height:7.50px;color:#3A3A3A;font-weight:bold;font-style:normal;transform:scaleX(0.8500);-webkit-text-stroke:0px #3A3A3A;">a</div>
<div class="t" style="left:668.60px;top:69.00px;font-size:7.50px;line-height:7.50px;color:#8A4FC8;font-weight:bold;font-style:normal;transform:scaleX(1.2750);-webkit-text-stroke:0px #8A4FC8;">b</div>
<div class="t" style="left:669.00px;top:74.00px;font-size:7.50px;line-height:7.50px;color:#3A3A3A;font-weight:bold;font-style:normal;transform:scaleX(0.9000);-webkit-text-stroke:0px #3A3A3A;">a</div>
<div class="t" style="left:673.00px;top:74.00px;font-size:7.50px;line-height:7.50px;color:#2F7BC8;font-weight:bold;font-style:normal;transform:scaleX(0.9000);-webkit-text-stroke:0px #2F7BC8;">c</div>
</body></html>
